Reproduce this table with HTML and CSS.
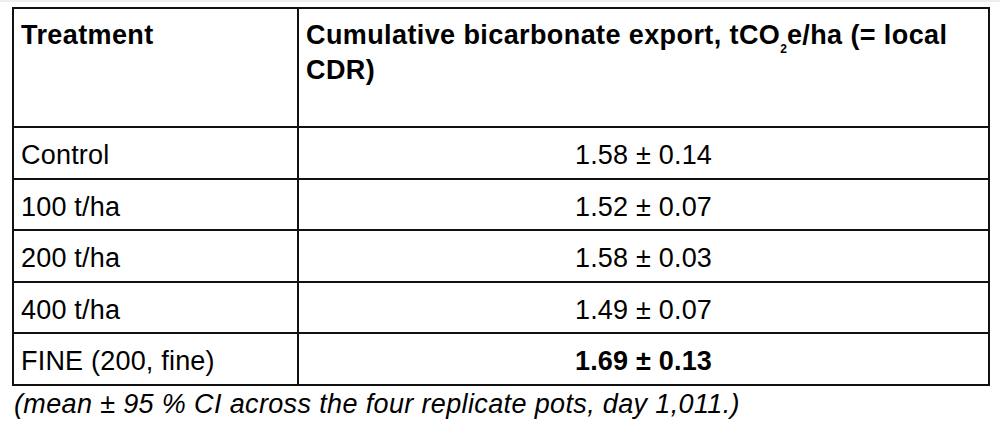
FILE: index.html
```html
<!DOCTYPE html>
<html lang="en">
<head>
<meta charset="utf-8">
<title>Cumulative bicarbonate export</title>
<link rel="stylesheet" href="styles.css">
</head>
<body>
<div class="page">
  <table class="data">
    <thead>
      <tr class="head-row">
        <th class="col-a">Treatment</th>
        <th class="col-b">Cumulative bicarbonate export, tCO<sub class="sub">2</sub>e/ha (= local CDR)</th>
      </tr>
    </thead>
    <tbody>
      <tr><td class="col-a">Control</td><td class="col-b num">1.58 ± 0.14</td></tr>
      <tr><td class="col-a">100 t/ha</td><td class="col-b num">1.52 ± 0.07</td></tr>
      <tr><td class="col-a">200 t/ha</td><td class="col-b num">1.58 ± 0.03</td></tr>
      <tr><td class="col-a">400 t/ha</td><td class="col-b num">1.49 ± 0.07</td></tr>
      <tr><td class="col-a">FINE (200, fine)</td><td class="col-b num strong">1.69 ± 0.13</td></tr>
    </tbody>
  </table>
  <p class="caption">(mean ± 95 % CI across the four replicate pots, day 1,011.)</p>
</div>
</body>
</html>
```

FILE: styles.css
```css
html, body {
  margin: 0;
  padding: 0;
  background: #ffffff;
}

body {
  font-family: "Liberation Sans", Arial, sans-serif;
  color: #000000;
  font-size: 27px;
}

.page {
  border-top: 2px solid #eeeeee;
  padding: 5px 0 0 12px;
}

.data {
  border-collapse: separate;
  border-spacing: 0;
  border-top: 2px solid #111111;
  border-left: 2px solid #111111;
  table-layout: fixed;
  width: 978px;
}

.data th,
.data td {
  border-right: 2px solid #111111;
  border-bottom: 2px solid #111111;
  vertical-align: top;
  box-sizing: border-box;
  text-align: left;
}

.col-a {
  width: 285px;
}

.col-b {
  width: 691px;
}

.head-row th {
  height: 119px;
  padding: 9px 8px 0 7px;
  font-weight: bold;
  line-height: 35px;
  letter-spacing: 0.4px;
}

.sub {
  font-size: 12px;
  line-height: 0;
  vertical-align: -9px;
  letter-spacing: 0;
}

.data td {
  height: 51.6px;
  padding: 12px 7px 0 7px;
  line-height: 31px;
  font-weight: normal;
  letter-spacing: 0.2px;
}

.data td.num {
  text-align: center;
}

.data td.strong {
  font-weight: bold;
}

.caption {
  margin: 3px 0 0 2px;
  font-style: italic;
  line-height: 31px;
  letter-spacing: 0.36px;
}
```
